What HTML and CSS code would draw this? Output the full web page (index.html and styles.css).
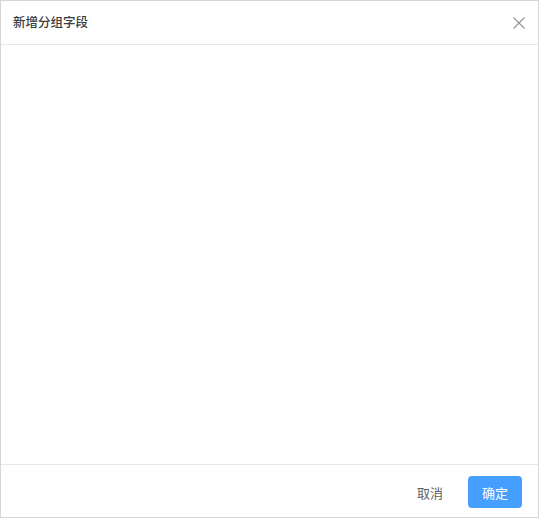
FILE: index.html
```html
<!DOCTYPE html>
<html lang="zh">
<head>
<meta charset="utf-8">
<link rel="stylesheet" href="styles.css">
</head>
<body>
<div class="dialog">
  <div class="header">
    <span class="title">新增分组字段</span>
    <button class="close" aria-label="关闭">
      <svg width="12" height="12" viewBox="0 0 12 12"><path d="M0.5 0.5 L11.5 11.5 M11.5 0.5 L0.5 11.5" stroke="#909399" stroke-width="1.1" fill="none"/></svg>
    </button>
  </div>
  <div class="body"></div>
  <div class="footer">
    <button class="btn btn-text">取消</button>
    <button class="btn btn-primary">确定</button>
  </div>
</div>
</body>
</html>
```
FILE: styles.css
```css
html, body { margin: 0; padding: 0; background: #fff; }
body { font-family: "Noto Sans CJK SC", "Liberation Sans", sans-serif; }
.dialog {
  width: 539px; height: 518px; box-sizing: border-box;
  border: 1px solid #d6d6d6;
  display: flex; flex-direction: column;
}
.header {
  height: 43px; border-bottom: 1px solid #e4e7ed;
  display: flex; align-items: center; justify-content: space-between;
  padding: 0 13px 0 12px; flex: none;
}
.title { font-size: 12.5px; font-weight: 500; color: #3a3c40; line-height: 1; }
.close { border: 0; background: none; padding: 0; width: 12px; height: 12px; display: flex; cursor: pointer; }
.body { flex: 1; }
.footer {
  height: 50px; border-top: 1px solid #e4e7ed; flex: none;
  display: flex; align-items: center; justify-content: flex-end;
  padding: 2px 16px 0 0; gap: 18px;
}
.btn { font-family: inherit; font-size: 13px; border: 0; cursor: pointer; }
.btn-text { background: none; color: #606266; padding: 0; width: 40px; height: 32px; }
.btn-primary { background: #469fff; color: #fff; width: 54px; height: 32px; border-radius: 4px; }
```
